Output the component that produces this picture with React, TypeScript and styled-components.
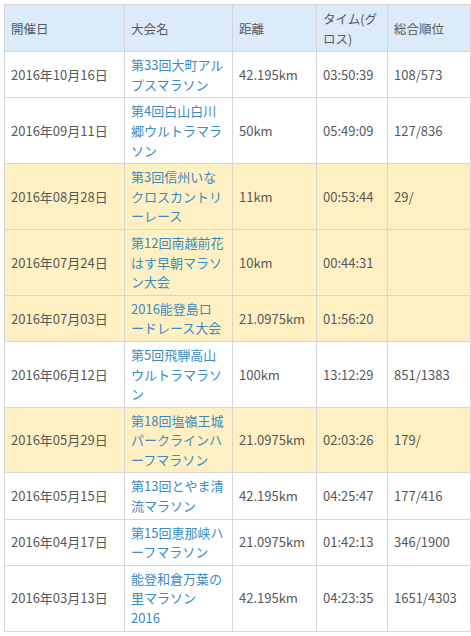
import React from 'react';
import styled, { createGlobalStyle } from 'styled-components';

const GlobalStyle = createGlobalStyle`
	body {
		margin: 0;
		background: #fff;
		font-family: "Noto Sans CJK JP", "Noto Sans", sans-serif;
	}
`;

type Race = {
	date: string;
	name: string[];
	distance: string;
	time: string;
	rank: string;
	trail?: boolean;
};

const races: Race[] = [
	{ date: '2016年10月16日', name: ['第33回大町アル', 'プスマラソン'], distance: '42.195km', time: '03:50:39', rank: '108/573' },
	{ date: '2016年09月11日', name: ['第4回白山白川', '郷ウルトラマラ', 'ソン'], distance: '50km', time: '05:49:09', rank: '127/836' },
	{ date: '2016年08月28日', name: ['第3回信州いな', 'クロスカントリ', 'ーレース'], distance: '11km', time: '00:53:44', rank: '29/', trail: true },
	{ date: '2016年07月24日', name: ['第12回南越前花', 'はす早朝マラソ', 'ン大会'], distance: '10km', time: '00:44:31', rank: '', trail: true },
	{ date: '2016年07月03日', name: ['2016能登島ロ', 'ードレース大会'], distance: '21.0975km', time: '01:56:20', rank: '', trail: true },
	{ date: '2016年06月12日', name: ['第5回飛騨高山', 'ウルトラマラソ', 'ン'], distance: '100km', time: '13:12:29', rank: '851/1383' },
	{ date: '2016年05月29日', name: ['第18回塩嶺王城', 'パークラインハ', 'ーフマラソン'], distance: '21.0975km', time: '02:03:26', rank: '179/', trail: true },
	{ date: '2016年05月15日', name: ['第13回とやま清', '流マラソン'], distance: '42.195km', time: '04:25:47', rank: '177/416' },
	{ date: '2016年04月17日', name: ['第15回恵那峡ハ', 'ーフマラソン'], distance: '21.0975km', time: '01:42:13', rank: '346/1900' },
	{ date: '2016年03月13日', name: ['能登和倉万葉の', '里マラソン', '2016'], distance: '42.195km', time: '04:23:35', rank: '1651/4303' },
];

export default function App() {
	return (
		<Page>
			<GlobalStyle />
			<Results>
				<colgroup>
					<col style={{ width: 120 }} />
					<col style={{ width: 108 }} />
					<col style={{ width: 84 }} />
					<col style={{ width: 71 }} />
					<col style={{ width: 83 }} />
				</colgroup>
				<thead>
					<tr>
						<HeadCell>開催日</HeadCell>
						<HeadCell>大会名</HeadCell>
						<HeadCell>距離</HeadCell>
						<HeadCell>
							タイム(グ
							<br />
							ロス)
						</HeadCell>
						<HeadCell>総合順位</HeadCell>
					</tr>
				</thead>
				<tbody>
					{races.map((race) => (
						<Row key={race.date} $highlight={race.trail}>
							<Cell>{race.date}</Cell>
							<Cell>
								<RaceLink href="#">
									{race.name.map((line, i) => (
										<React.Fragment key={i}>
											{i > 0 && <br />}
											{line}
										</React.Fragment>
									))}
								</RaceLink>
							</Cell>
							<Cell>{race.distance}</Cell>
							<Cell>{race.time}</Cell>
							<Cell>{race.rank}</Cell>
						</Row>
					))}
				</tbody>
			</Results>
		</Page>
	);
}

const Page = styled.div`
	padding: 4px;
`;

const Results = styled.table`
	width: 466px;
	table-layout: fixed;
	border-collapse: collapse;
	font-size: 13px;
	line-height: 19.6px;
	color: #585858;
`;

const HeadCell = styled.th`
	background: #dcebf9;
	border: 1px solid #d6d6d6;
	padding: 4px 6px 3px;
	font-size: 12.5px;
	font-weight: normal;
	text-align: left;
	vertical-align: middle;
	white-space: nowrap;
	color: #585858;
`;

const Row = styled.tr<{ $highlight?: boolean }>`
	background: ${(p) => (p.$highlight ? '#fff0c4' : '#fff')};
`;

const Cell = styled.td`
	border: 1px solid #d6d6d6;
	padding: 3px 6px;
	vertical-align: middle;
	white-space: nowrap;
	overflow: hidden;
`;

const RaceLink = styled.a`
	color: #3a8cc0;
	text-decoration: none;
`;
